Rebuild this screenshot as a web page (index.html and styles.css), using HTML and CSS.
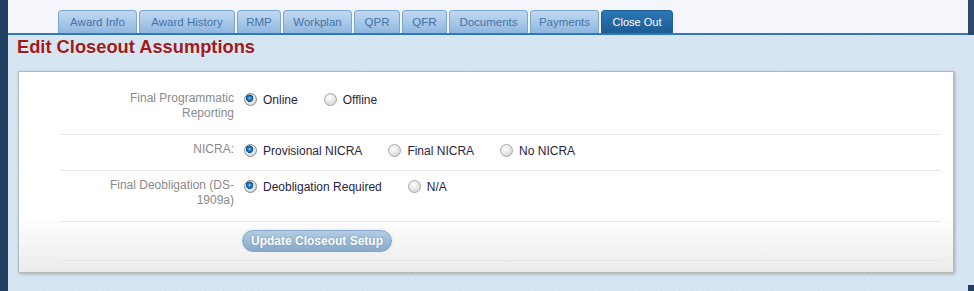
FILE: index.html
```html
<!DOCTYPE html>
<html lang="en">

<head>
    <meta charset="UTF-8">
    <meta name="viewport" content="width=device-width, initial-scale=1.0">
    <title>Edit Closeout Assumptions</title>
    <link rel="stylesheet" href="styles.css">
</head>

<body>
    <div class="sidebar"></div>
    <div class="main">
        <div class="header">
            <ul class="tabs">
                <li class="tab">Award Info</li>
                <li class="tab">Award History</li>
                <li class="tab">RMP</li>
                <li class="tab">Workplan</li>
                <li class="tab">QPR</li>
                <li class="tab">QFR</li>
                <li class="tab">Documents</li>
                <li class="tab">Payments</li>
                <li class="tab active">Close Out</li>
            </ul>
            <div class="edge"></div>
        </div>

        <h1 class="title">Edit Closeout Assumptions</h1>

        <div class="panel">
            <div class="form">
                <div class="row">
                    <label class="label">Final Programmatic Reporting</label>
                    <div class="options">
                        <label class="option"><input type="radio" name="reporting" checked> Online</label>
                        <label class="option"><input type="radio" name="reporting"> Offline</label>
                    </div>
                </div>
                <div class="row">
                    <label class="label">NICRA:</label>
                    <div class="options">
                        <label class="option"><input type="radio" name="nicra" checked> Provisional NICRA</label>
                        <label class="option"><input type="radio" name="nicra"> Final NICRA</label>
                        <label class="option"><input type="radio" name="nicra"> No NICRA</label>
                    </div>
                </div>
                <div class="row">
                    <label class="label">Final Deobligation (DS-1909a)</label>
                    <div class="options">
                        <label class="option"><input type="radio" name="deob" checked> Deobligation Required</label>
                        <label class="option"><input type="radio" name="deob"> N/A</label>
                    </div>
                </div>
                <div class="row row-submit">
                    <div></div>
                    <div>
                        <button class="btn">Update Closeout Setup</button>
                    </div>
                </div>
            </div>
        </div>
    </div>
    <div class="corner"></div>
</body>

</html>
```

FILE: styles.css
```css
body {
    font-family: "Liberation Sans", Arial, sans-serif;
    font-size: 12px;
    margin: 0;
    min-height: 100vh;
    display: flex;
    background-color: #d6e5f2;
    background-image:
        repeating-linear-gradient(30deg, rgba(255, 255, 255, 0.07) 0 1px, transparent 1px 3px),
        repeating-linear-gradient(-60deg, rgba(120, 150, 180, 0.04) 0 1px, transparent 1px 5px);
    position: relative;
    overflow: hidden;
}

.sidebar {
    width: 8px;
    flex: 0 0 8px;
    background-color: #1e3f5f;
}

.main {
    flex: 1;
}

/* top bar with tabs */
.header {
    display: flex;
}

.tabs {
    flex: 1;
    display: flex;
    align-items: flex-end;
    gap: 2px;
    height: 33px;
    margin: 0;
    padding: 0 0 0 50px;
    list-style: none;
    background-color: #f4f6fb;
    border-bottom: 2px solid #2e79b9;
}

.edge {
    width: 6px;
    height: 35px;
    background-color: #2a4a6a;
}

.tab {
    box-sizing: border-box;
    height: 23px;
    line-height: 22px;
    text-align: center;
    font-size: 11.5px;
    color: #4672a8;
    background: linear-gradient(to bottom, #c2d9f1, #8fb7df);
    border: 1px solid #7ba7d4;
    border-bottom: none;
    border-radius: 4px 4px 0 0;
}

/* tab widths as in the original menu */
.tab:nth-child(1) { width: 79px; }
.tab:nth-child(2) { width: 96px; }
.tab:nth-child(3) { width: 44px; }
.tab:nth-child(4) { width: 69px; }
.tab:nth-child(5) { width: 46px; }
.tab:nth-child(6) { width: 45px; }
.tab:nth-child(7) { width: 79px; }
.tab:nth-child(8) { width: 69px; }
.tab:nth-child(9) { width: 72px; }

.tab.active {
    color: #fff;
    font-size: 11px;
    background: linear-gradient(to bottom, #2d78ba, #1b5b92);
    border-color: #1d5f98;
}

.title {
    margin: 1px 0 13px 9px;
    font-size: 18.3px;
    line-height: 22px;
    color: #a31818;
    text-shadow: 0 1px 0 rgba(255, 255, 255, 0.6);
}

/* form panel */
.panel {
    width: 936px;
    box-sizing: border-box;
    margin-left: 10px;
    padding: 12px 12px 11px 42px;
    background: linear-gradient(to bottom, #fff 0, #fff 72%, #ebebeb 100%);
    border: 1px solid #b8b8b8;
    box-shadow: 1px 1px 3px rgba(0, 0, 0, 0.25);
}

.row {
    display: grid;
    grid-template-columns: 173px 1fr;
    gap: 10px;
    padding: 7px 0 13px;
    border-bottom: 1px solid #e6e6e6;
}

.row-submit {
    padding: 8px 0;
}

.label {
    padding-left: 41px;
    text-align: right;
    color: #8a8a8a;
    line-height: 15px;
}

.options {
    display: flex;
    align-items: center;
    height: 15px;
    margin-top: 1px;
    margin-bottom: -2px;
}

.option {
    display: flex;
    align-items: center;
    gap: 6px;
    margin-right: 26px;
    color: #2b2440;
}

.option input {
    -webkit-appearance: none;
    appearance: none;
    width: 13px;
    height: 13px;
    margin: 0;
    border-radius: 50%;
    border: 1px solid #a8a8a8;
    background: radial-gradient(circle at 40% 35%, #fff 0, #e8e8e8 45%, #c9c9c9 100%);
}

.option input:checked {
    border-color: #8a8a8a;
    background:
        radial-gradient(circle at 42% 38%, #9fd2f5 0, #2a86cc 1.5px, #0c4f8c 3.5px, transparent 4px),
        radial-gradient(circle at 40% 35%, #fff 0, #e6e6e6 55%, #c4c4c4 100%);
}

.btn {
    margin-left: -2px;
    height: 22px;
    padding: 0 8px;
    font-family: inherit;
    font-size: 12px;
    font-weight: bold;
    color: #fff;
    text-shadow: 0 0 2px rgba(70, 110, 150, 0.6);
    background: linear-gradient(to bottom, #b3cce3, #87a9ca);
    border: 1px solid #86a9cb;
    border-radius: 11px;
    box-shadow: 0 0 0 2px #f0f2f4;
}

.corner {
    position: absolute;
    right: 0;
    bottom: 0;
    width: 6px;
    height: 6px;
    background-color: #1e3f5f;
}
```
